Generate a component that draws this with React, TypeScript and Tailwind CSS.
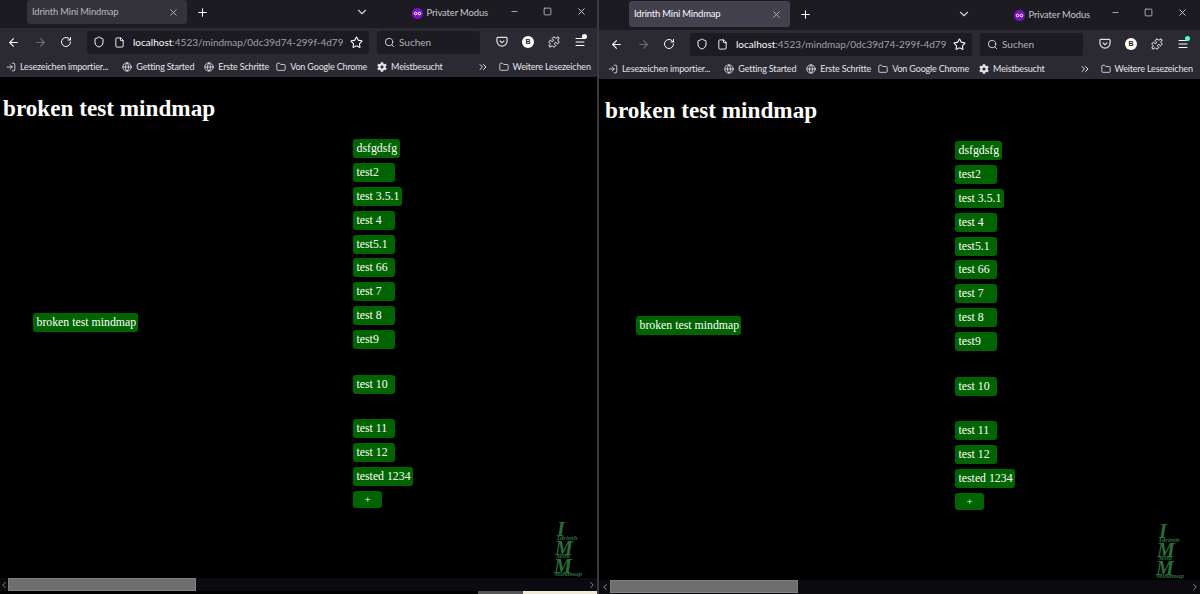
import { ArrowLeft, ArrowRight, RotateCw, Shield, File, Star, Search, ChevronDown, Plus, X, Minus, Square, Puzzle, Menu, Globe, Folder, ChevronsRight, LogIn, ChevronLeft, ChevronRight } from 'lucide-react'
import { FaCog } from 'react-icons/fa'

const serif = 'font-["Liberation_Serif",serif]'
const ui = 'font-["Lato","Noto_Sans",sans-serif]'

const nodes = [
  { label: 'dsfgdsfg', w: 'w-[47px]' },
  { label: 'test2', w: 'w-[42px]' },
  { label: 'test 3.5.1', w: 'w-[49px]' },
  { label: 'test 4', w: 'w-[42px]' },
  { label: 'test5.1', w: 'w-[42px]' },
  { label: 'test 66', w: 'w-[42px]' },
  { label: 'test 7', w: 'w-[42px]' },
  { label: 'test 8', w: 'w-[42px]' },
  { label: 'test9', w: 'w-[42px]' },
  { label: 'test 10', w: 'w-[42px]', gap: true },
  { label: 'test 11', w: 'w-[42px]', gap: true },
  { label: 'test 12', w: 'w-[42px]' },
  { label: 'tested 1234', w: 'w-[60px]' },
]

function Bookmark({ icon, label, className = '' }: { icon: React.ReactNode; label: string; className?: string }) {
  return (
    <div className={`flex items-center gap-[4px] shrink-0 whitespace-nowrap ${className}`}>
      {icon}
      <span>{label}</span>
    </div>
  )
}

function Node({ label, w, gap }: { label: string; w: string; gap?: boolean }) {
  return (
    <div className={`${w} ${gap ? 'mt-[20.5px]' : ''} h-[19px] bg-[#006400] rounded-[3px] pl-[3.5px] text-[11.8px] leading-[18px] text-white whitespace-nowrap`}>
      {label}
    </div>
  )
}

function Browser({ front }: { front?: boolean }) {
  return (
    <div className="relative h-full flex flex-col bg-black overflow-hidden">
      {/* Tab strip */}
      <div className={`${front ? 'h-[30px]' : 'h-[28px]'} shrink-0 bg-[#1c1b22] flex items-start text-[#fbfbfe] ${ui}`}>
        <div className={`${front ? 'ml-[30px] mt-[1px] h-[26px] w-[161px] bg-[#42414d] text-[#fbfbfe]' : 'ml-[27px] h-[24px] w-[160px] bg-[#34333c] text-[#b8b8bc]'} rounded-[3px] flex items-center justify-between pl-[5px] pr-[8px] text-[9.4px] tracking-[-0.15px]`}>
          <span>Idrinth Mini Mindmap</span>
          <X size={11} className="text-[#b8b8bc]" />
        </div>
        <Plus size={13} className={`${front ? 'mt-[8px]' : 'mt-[6px]'} ml-[9px]`} />
        <div className="flex-1" />
        <ChevronDown size={14} className={`${front ? 'mt-[7px]' : 'mt-[5px]'} mr-[43px] text-[#d0d0d4]`} />
        <div className={`${front ? 'mt-[8px] mr-[21px]' : 'mt-[6px] mr-[22px]'} flex items-center gap-[4px] text-[9.4px] tracking-[-0.1px] text-[#c8c8cc]`}>
          <svg width="11" height="11" viewBox="0 0 11 11">
            <circle cx="5.5" cy="5.5" r="5.5" fill="#7a12c4" />
            <circle cx="3.6" cy="5.5" r="1.3" fill="none" stroke="#fff" strokeWidth="1" />
            <circle cx="7.4" cy="5.5" r="1.3" fill="none" stroke="#fff" strokeWidth="1" />
          </svg>
          <span>Privater Modus</span>
        </div>
        <div className={`${front ? 'mt-[7px] mr-[12px]' : 'mt-[6px] mr-[10px]'} flex items-center gap-[24px] text-[#d0d0d4]`}>
          <Minus size={9} />
          <Square size={9} />
          <X size={11} />
        </div>
      </div>
      {/* Nav bar */}
      <div className="h-[28px] shrink-0 bg-[#2b2a33] flex items-center text-[#fbfbfe]">
        <ArrowLeft size={13} className={front ? 'ml-[11px]' : 'ml-[7px]'} />
        <ArrowRight size={13} className="ml-[14px] text-[#6e6d75]" />
        <RotateCw size={12} className="ml-[13px]" />
        <div className="ml-[15px] h-[23px] flex-1 min-w-0 bg-[#1c1b22] rounded-[3px] flex items-center pl-[6px] pr-[6px]">
          <Shield size={12} className="shrink-0" />
          <File size={11} className="shrink-0 ml-[9px]" />
          <div className={`ml-[8px] mr-[7px] flex-1 min-w-0 overflow-hidden whitespace-nowrap text-[10px] text-[#a0a0a5] ${ui}`}>
            <span className="text-[#fbfbfe]">localhost</span>:4523/mindmap/0dc39d74-299f-4d79
          </div>
          <Star size={13} className="shrink-0" />
        </div>
        <div className={`ml-[8px] w-[103px] h-[23px] shrink-0 bg-[#1c1b22] rounded-[3px] flex items-center gap-[4px] pl-[7px] text-[10px] text-[#b0b0b5] ${ui}`}>
          <Search size={11} className="text-[#e0e0e4]" />
          <span>Suchen</span>
        </div>
        <div className="w-[117px] shrink-0 flex items-center justify-between pl-[16px] pr-[11px]">
          <svg width="12" height="12" viewBox="0 0 13 12" fill="none" stroke="#e0e0e4" strokeWidth="1.3">
            <path d="M2 1h9a1 1 0 0 1 1 1v3a5.5 5.5 0 0 1-11 0V2a1 1 0 0 1 1-1z" />
            <path d="M4 4.5l2.5 2.2L9 4.5" />
          </svg>
          <div className="w-[12px] h-[12px] rounded-full bg-white text-[#1c1b22] text-[7px] font-bold font-['Liberation_Sans',sans-serif] flex items-center justify-center">B</div>
          <Puzzle size={12} />
          <div className="relative">
            <Menu size={12} />
            <div className={`absolute -top-[2px] -right-[1px] w-[5px] h-[5px] rounded-full ${front ? 'bg-[#54ffbd]' : 'bg-white'}`} />
          </div>
        </div>
      </div>
      {/* Bookmarks */}
      <div className={`h-[21px] shrink-0 bg-[#2b2a33] flex items-center ${front ? 'pl-[9px]' : 'pl-[6px]'} gap-[10px] text-[9px] tracking-[-0.17px] text-[#e4e4e8] ${ui}`}>
        <Bookmark icon={<LogIn size={10} />} label="Lesezeichen importier..." />
        <Bookmark className="ml-[4px]" icon={<Globe size={10} />} label="Getting Started" />
        <Bookmark icon={<Globe size={10} />} label="Erste Schritte" />
        <Bookmark className="-ml-[3px]" icon={<Folder size={10} />} label="Von Google Chrome" />
        <Bookmark icon={<FaCog size={10} />} label="Meistbesucht" />
        <ChevronsRight size={12} className="ml-[24px] shrink-0" />
        <Bookmark icon={<Folder size={10} />} label="Weitere Lesezeichen" />
      </div>
      {/* Page */}
      <div className={`relative flex-1 min-h-0 bg-black text-white ${serif}`}>
        <h1 className={`${front ? 'pl-[6px]' : 'pl-[3px]'} pt-[18px] text-[23.2px] leading-[26px] font-bold whitespace-nowrap`}>broken test mindmap</h1>
        <div className={`absolute ${front ? 'left-[37px] top-[237px]' : 'left-[33px] top-[236px]'} w-[105px] h-[19px] bg-[#006400] rounded-[3px] pl-[3.5px] text-[11.8px] leading-[18px] whitespace-nowrap`}>
          broken test mindmap
        </div>
        <div className={`absolute ${front ? 'left-[356px]' : 'left-[353px]'} top-[62px] flex flex-col gap-[4.9px]`}>
          {nodes.map((n) => (
            <Node key={n.label} {...n} />
          ))}
          <div className="w-[29px] h-[17px] bg-[#006400] rounded-[3px] text-center text-[11px] leading-[17px]">+</div>
        </div>
        <div className={`absolute ${front ? 'left-[557px]' : 'left-[554px]'} top-[442px] flex flex-col items-start text-[#2a6b3a] italic font-bold leading-none`}>
          <span className="text-[20px] h-[16px] ml-[3px]">I</span>
          <span className="text-[7px] h-[3px] ml-[3px]">Idrinth</span>
          <span className="text-[20px] h-[15px] ml-[1px]">M</span>
          <span className="text-[7px] h-[3px] ml-[2px]">Mini</span>
          <span className="text-[20px] h-[15px]">M</span>
          <span className="text-[7px] h-[3px]">Mindmap</span>
        </div>
      </div>
      {/* Horizontal scrollbar */}
      <div className={`${front ? 'h-[14px]' : 'h-[13px]'} shrink-0 bg-[#0b0b0f] flex items-start text-[#a0a0a0]`}>
        <div className={`${front ? 'w-[11px]' : 'w-[8px]'} h-[13px] shrink-0 flex items-center justify-center`}>
          <ChevronLeft size={10} className="shrink-0" />
        </div>
        <div className="w-[188px] h-[13px] bg-[#6e6e6e] border border-[#808080]" />
        <div className="flex-1" />
        <div className="w-[10px] h-[13px] shrink-0 flex items-center justify-center">
          <ChevronRight size={10} className="shrink-0" />
        </div>
      </div>
      {/* Desktop peeking out under the shorter window */}
      {!front && (
        <div className="h-[3px] shrink-0 flex bg-black">
          <div className="w-[478px]" />
          <div className="w-[45px] bg-[#555]" />
          <div className="flex-1 bg-[#efe9d8]" />
        </div>
      )}
    </div>
  )
}

export default function App() {
  return (
    <div className="w-[1200px] h-[594px] overflow-hidden grid grid-cols-[597px_603px] bg-black">
      <div className="h-[594px] min-w-0">
        <Browser />
      </div>
      <div className="h-[594px] min-w-0 border-l-2 border-[#3a3a3e]">
        <Browser front />
      </div>
    </div>
  )
}
